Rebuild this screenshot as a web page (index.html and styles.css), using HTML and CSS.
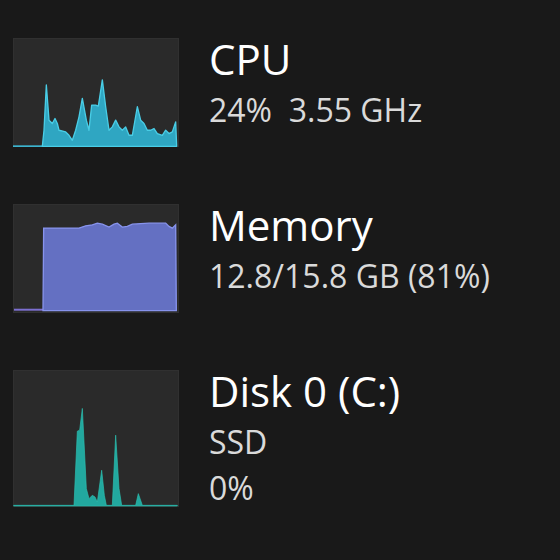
FILE: index.html
```html
<!DOCTYPE html>
<html>
<head>
<meta charset="utf-8">
<link rel="stylesheet" href="styles.css">
</head>
<body>
<div class="list">
  <div class="row">
    <div class="chart">
      <svg viewBox="42 55 498 325" preserveAspectRatio="none" width="166" height="109">
        <polyline class="base cpu-base" points="42,378 132,378"/>
        <path class="cpu" d="M130,378 L135,330 L142,195 L150,300 L160,310 L168,295 L175,310 L180,330 L200,335 L210,345 L220,360 L230,330 L240,290 L250,235 L262,300 L270,330 L278,255 L290,255 L298,258 L310,180 L320,260 L330,330 L340,320 L350,300 L360,320 L370,330 L380,320 L390,345 L400,345 L415,260 L425,300 L435,310 L445,330 L455,330 L465,325 L475,340 L490,345 L500,330 L510,340 L520,335 L530,305 L533,378 Z"/>
      </svg>
    </div>
    <div class="info">
      <div class="title">CPU</div>
      <div class="sub">24%&nbsp;&nbsp;3.55 GHz</div>
    </div>
  </div>
  <div class="row">
    <div class="chart">
      <svg viewBox="42 42 498 330" preserveAspectRatio="none" width="166" height="109">
        <polyline class="base mem-base" points="45,362 132,362"/>
        <path class="mem" d="M132,365 L134,115 L240,115 L260,108 L280,105 L295,100 L310,103 L330,112 L345,103 L355,100 L370,112 L385,110 L400,103 L450,100 L500,100 L510,110 L520,115 L530,105 L532,365 Z"/>
      </svg>
    </div>
    <div class="info">
      <div class="title">Memory</div>
      <div class="sub">12.8/15.8 GB (81%)</div>
    </div>
  </div>
  <div class="row">
    <div class="chart tall">
      <svg viewBox="42 45 498 410" preserveAspectRatio="none" width="166" height="137">
        <path class="disk" d="M44,450 L225,450 L235,228 L242,225 L250,160 L262,400 L270,430 L280,420 L288,425 L295,440 L308,345 L316,420 L322,450 L340,450 L350,240 L360,400 L368,450 L410,450 L418,415 L430,450 L535,450 L535,452 L44,452 Z"/>
      </svg>
    </div>
    <div class="info">
      <div class="title">Disk 0 (C:)</div>
      <div class="sub">SSD</div>
      <div class="sub">0%</div>
    </div>
  </div>
</div>
</body>
</html>
```

FILE: styles.css
```css
html, body {
  margin: 0;
  padding: 0;
  background: #191919;
  width: 560px;
  height: 560px;
  overflow: hidden;
}
.list {
  display: flex;
  flex-direction: column;
  gap: 57px;
  padding: 38px 0 0 13px;
}
.row {
  display: flex;
  gap: 30px;
  align-items: flex-start;
}
.chart {
  width: 166px;
  height: 109px;
  background: #2a2a2a;
  box-shadow: inset 0 0 0 1px #303030;
  flex: none;
}
.chart.tall {
  height: 137px;
}
.chart svg {
  display: block;
}
.base {
  fill: none;
  stroke-width: 6;
}
.cpu-base { stroke: #3cb4cf; }
.mem-base { stroke: #7c6fd0; }
.cpu {
  fill: #2fa6c2;
  stroke: #49cde6;
  stroke-width: 4;
  stroke-linejoin: round;
}
.mem {
  fill: #6470c2;
  stroke: #8793ec;
  stroke-width: 4;
}
.disk {
  fill: #22a89f;
  stroke: #2cbfb1;
  stroke-width: 2;
}
.info {
  font-family: "Open Sans", "Noto Sans", sans-serif;
  color: #ffffff;
}
.title {
  font-size: 42px;
  line-height: 56px;
  margin-top: -7px;
}
.sub {
  font-size: 32px;
  line-height: 46px;
  color: #dadada;
}
```
